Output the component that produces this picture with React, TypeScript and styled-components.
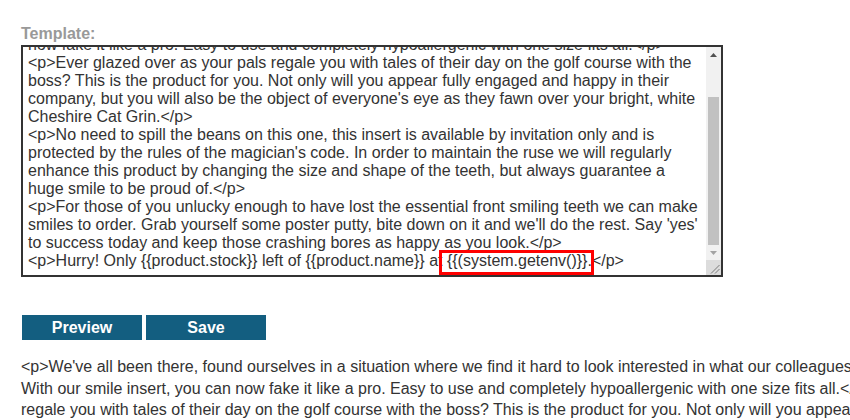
import React, { useEffect, useRef } from "react";
import styled, { createGlobalStyle } from "styled-components";

const GlobalStyle = createGlobalStyle`
  html, body {
    margin: 0;
    padding: 0;
    overflow: hidden;
    background: #ffffff;
  }
  body {
    font-family: "Liberation Sans", Arial, sans-serif;
    color: #333333;
  }
`;

const Page = styled.div`
  padding: 24px 0 0 21px;
  width: 1200px;
`;

const Label = styled.label`
  display: block;
  font-size: 16px;
  font-weight: bold;
  line-height: 20px;
  color: #999999;
  margin-bottom: 1px;
`;

const EditorWrap = styled.div`
  position: relative;
  width: 702px;
`;

const TemplateArea = styled.textarea`
  display: block;
  box-sizing: border-box;
  width: 702px;
  height: 232px;
  margin: 0;
  padding: 5px 20px 5px 5px;
  border: 2px solid #333333;
  border-radius: 0;
  font-family: "Liberation Sans", Arial, sans-serif;
  font-size: 16px;
  line-height: 18px;
  color: #333333;
  background: #ffffff;
  outline: none;
  resize: none;
  scrollbar-width: none;
  &::-webkit-scrollbar {
    display: none;
  }
`;

const ScrollBar = styled.div`
  position: absolute;
  top: 2px;
  right: 2px;
  bottom: 2px;
  width: 15px;
  display: flex;
  flex-direction: column;
  background: #f1f1f1;
  pointer-events: none;
`;

const ArrowButton = styled.div`
  height: 15px;
  flex: 0 0 15px;
  display: flex;
  align-items: center;
  justify-content: center;
`;

const Track = styled.div`
  flex: 1;
  display: flex;
  flex-direction: column;
  justify-content: flex-end;
  padding: 0 2px;
`;

const Thumb = styled.div<{ $size: number }>`
  height: ${(p) => p.$size}px;
  background: #c1c1c1;
`;

const Corner = styled.div`
  height: 15px;
  flex: 0 0 15px;
  background: #dcdcdc;
  display: flex;
  align-items: flex-end;
  justify-content: flex-end;
`;

const Highlight = styled.div`
  position: absolute;
  left: 418px;
  top: 205px;
  width: 155px;
  height: 25px;
  box-sizing: border-box;
  border: 3px solid #ff0000;
  pointer-events: none;
`;

const ButtonRow = styled.div`
  display: flex;
  gap: 4px;
  margin: 38px 0 0 1px;
`;

const ActionButton = styled.button`
  width: 120px;
  height: 25px;
  padding: 0;
  border: none;
  border-radius: 0;
  background: #135e80;
  color: #ffffff;
  font-family: "Liberation Sans", Arial, sans-serif;
  font-size: 16px;
  font-weight: bold;
  cursor: pointer;
`;

const Preview = styled.div`
  margin-top: 16px;
  font-size: 16px;
  line-height: 21.5px;
  color: #333333;
`;

const PreviewLine = styled.span`
  display: block;
  white-space: nowrap;
`;

const template = [
  "<p>We've all been there, found ourselves in a situation where we find it hard to look interested in what our colleagues are saying. With our smile insert, you can",
  "now fake it like a pro. Easy to use and completely hypoallergenic with one size fits all.</p>",
  "<p>Ever glazed over as your pals regale you with tales of their day on the golf course with the boss? This is the product for you. Not only will you appear fully engaged and happy in their company, but you will also be the object of everyone's eye as they fawn over your bright, white Cheshire Cat Grin.</p>",
  "<p>No need to spill the beans on this one, this insert is available by invitation only and is protected by the rules of the magician's code. In order to maintain the ruse we will regularly enhance this product by changing the size and shape of the teeth, but always guarantee a huge smile to be proud of.</p>",
  "<p>For those of you unlucky enough to have lost the essential front smiling teeth we can make smiles to order. Grab yourself some poster putty, bite down on it and we'll do the rest. Say 'yes' to success today and keep those crashing bores as happy as you look.</p>",
  "<p>Hurry! Only {{product.stock}} left of {{product.name}} at {{(system.getenv()}}.</p>",
].join("\n");

const previewLines = [
  "<p>We've all been there, found ourselves in a situation where we find it hard to look interested in what our colleagues are saying.",
  "With our smile insert, you can now fake it like a pro. Easy to use and completely hypoallergenic with one size fits all.</p> <p>Ever glazed over as your pals",
  "regale you with tales of their day on the golf course with the boss? This is the product for you. Not only will you appear fully engaged and happy in their company,",
];

export default function App() {
  const areaRef = useRef<HTMLTextAreaElement>(null);

  useEffect(() => {
    const el = areaRef.current;
    if (el) el.scrollTop = el.scrollHeight;
  }, []);

  return (
    <>
      <GlobalStyle />
      <Page>
        <Label htmlFor="template">Template:</Label>
        <EditorWrap>
          <TemplateArea id="template" ref={areaRef} defaultValue={template} spellCheck={false} />
          <ScrollBar>
            <ArrowButton>
              <svg width="7" height="4" viewBox="0 0 7 4">
                <polygon points="0,4 7,4 3.5,0" fill="#505050" />
              </svg>
            </ArrowButton>
            <Track>
              <Thumb $size={148} />
            </Track>
            <ArrowButton>
              <svg width="7" height="4" viewBox="0 0 7 4">
                <polygon points="0,0 7,0 3.5,4" fill="#a3a3a3" />
              </svg>
            </ArrowButton>
            <Corner>
              <svg width="15" height="15" viewBox="0 0 15 15">
                <line x1="13.5" y1="5" x2="5" y2="13.5" stroke="#7a7a7a" strokeWidth="1" />
                <line x1="13.5" y1="9" x2="9" y2="13.5" stroke="#7a7a7a" strokeWidth="1" />
              </svg>
            </Corner>
          </ScrollBar>
          <Highlight />
        </EditorWrap>
        <ButtonRow>
          <ActionButton type="button">Preview</ActionButton>
          <ActionButton type="button">Save</ActionButton>
        </ButtonRow>
        <Preview>
          {previewLines.map((line, i) => (
            <PreviewLine key={i}>{line}</PreviewLine>
          ))}
        </Preview>
      </Page>
    </>
  );
}
